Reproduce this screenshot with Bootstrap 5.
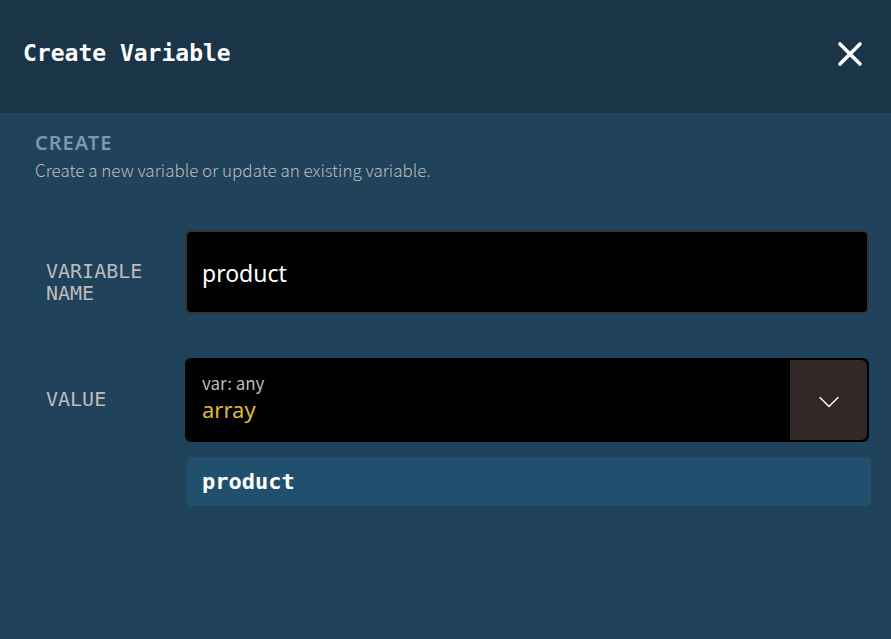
<!DOCTYPE html>
<html lang="en">
<head>
<meta charset="utf-8">
<meta name="viewport" content="width=device-width, initial-scale=1">
<title>Create Variable</title>
<link href="https://cdn.jsdelivr.net/npm/bootstrap@5.3.0/dist/css/bootstrap.min.css" rel="stylesheet">
<style>
body { background: #20425a; color: #fff; font-family: "Noto Sans", sans-serif; }
.mono { font-family: "DejaVu Sans Mono", monospace; }
.panel-head { background: #1b3548; padding: 33px 23px 32px; min-height: 113px; }
.panel-title { font-size: 23px; line-height: 40px; font-weight: 700; }
.close-btn { line-height: 0; padding: 8px 5px; }
.panel-body { padding: 16px 22px 24px 35px; }
.section-title { color: #7898b4; font-size: 20px; line-height: 28px; font-weight: 600; letter-spacing: 1px; }
.section-text { color: #bcbcbc; font-family: "Noto Sans CJK SC", sans-serif; font-weight: 300; font-size: 17px; line-height: 26px; }
.fields { display: grid; grid-template-columns: 139px 1fr; row-gap: 44px; margin-top: 47px; padding-left: 11px; }
.field-label { color: #bcbcbc; font-size: 20px; line-height: 22px; }
.label-name { padding-top: 20px; }
.label-value { padding-top: 30px; }
.field-input { background: #000; color: #fff; border: 2px solid #333; border-radius: 6px; height: 84px; padding: 2px 15px 0; font-size: 23px; }
.field-input:focus { background: #000; color: #fff; border-color: #333; box-shadow: none; }
.value-box { background: #000; border: 2px solid #000; border-radius: 6px; height: 84px; overflow: hidden; }
.value-text { padding: 0 15px 6px; }
.value-type { color: #bcbcbc; font-size: 17px; line-height: 24px; font-family: "Noto Sans CJK SC", sans-serif; }
.value-kind { color: #e0b83c; font-size: 22px; line-height: 28px; }
.value-toggle { width: 77px; background: #332828; }
.option { background: #20506e; color: #fff; border-radius: 4px; margin: 15px 0 0 2px; padding: 0 15px; font-size: 22px; line-height: 49px; font-weight: 700; }
</style>
</head>
<body>
<header class="panel-head d-flex justify-content-between align-items-start">
  <h1 class="panel-title mono mb-0">Create Variable</h1>
  <button type="button" class="close-btn btn border-0" aria-label="Close">
    <svg width="26" height="26" viewBox="0 0 26 26" fill="none" stroke="#fff" stroke-width="3.6" stroke-linecap="round"><path d="M3 3 23 23M23 3 3 23"/></svg>
  </button>
</header>
<main class="panel-body">
  <h2 class="section-title mb-0">CREATE</h2>
  <p class="section-text mb-0">Create a new variable or update an existing variable.</p>
  <form class="fields">
    <label class="field-label label-name mono align-self-center" for="varName">VARIABLE<br>NAME</label>
    <input class="field-input form-control" id="varName" type="text" value="product">
    <label class="field-label label-value mono" for="varValue">VALUE</label>
    <div>
      <div class="value-box d-flex">
        <div class="value-text flex-grow-1 d-flex flex-column justify-content-center">
          <span class="value-type">var: any</span>
          <span class="value-kind">array</span>
        </div>
        <button type="button" id="varValue" class="value-toggle btn border-0 rounded-0 rounded-end p-0" aria-label="Show values">
          <svg width="20" height="12" viewBox="0 0 20 12" fill="none" stroke="#fff" stroke-width="1.4" stroke-linecap="round"><path d="M1 1.5 10 10.5 19 1.5"/></svg>
        </button>
      </div>
      <button type="button" class="option mono btn border-0 text-start w-100">product</button>
    </div>
  </form>
</main>
<script src="https://cdn.jsdelivr.net/npm/bootstrap@5.3.0/dist/js/bootstrap.bundle.min.js"></script>
</body>
</html>
